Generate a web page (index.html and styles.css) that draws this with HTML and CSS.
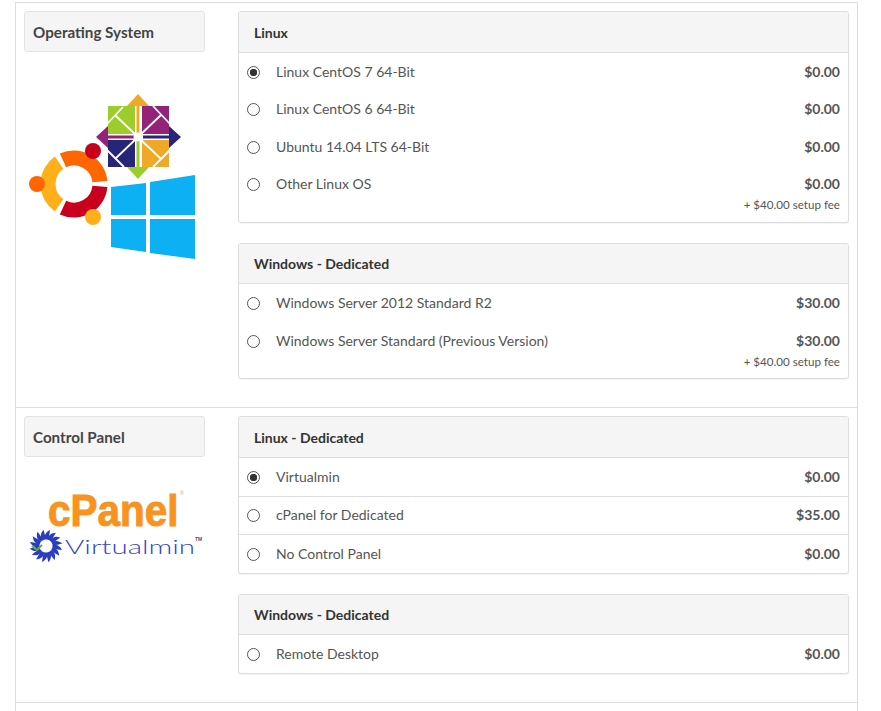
FILE: index.html
```html
<!DOCTYPE html>
<html lang="en">
<head>
<meta charset="utf-8">
<title>Configure Server</title>
<link rel="stylesheet" href="styles.css">
</head>
<body>
<main class="config">
  <section class="group">
    <div class="side">
      <h3 class="side-title">Operating System</h3>
      <svg class="logo logo-os" viewBox="29 94 167 166" width="167" height="166" aria-hidden="true">
        <polygon fill="#f0a926" points="138,94 149,106 139.5,106 139.5,134 136.5,134 136.5,106 127,106"/>
        <polygon fill="#9ccd2a" points="138,179 127,167 136.5,167 136.5,140 139.5,140 139.5,167 149,167"/>
        <polygon fill="#932279" points="96,137 108,126 108,135.5 134,135.5 134,138.5 108,138.5 108,148"/>
        <polygon fill="#262577" points="181,137 169,126 169,135.5 143,135.5 143,138.5 169,138.5 169,148"/>
        <rect x="108" y="106" width="27" height="28" fill="#9ccd2a"/>
        <rect x="142" y="106" width="27" height="28" fill="#932279"/>
        <rect x="108" y="140" width="27" height="27" fill="#262577"/>
        <rect x="142" y="140" width="27" height="27" fill="#f0a926"/>
        <g class="cent-lines">
          <path d="M138 137 L115 115 M107 124 L123 107"/>
          <path d="M138 137 L161 115 M153 106 L170 124"/>
          <path d="M138 137 L115 159 M107 150 L124 167"/>
          <path d="M138 137 L161 159 M170 150 L153 167"/>
        </g>
        <circle cx="138" cy="137" r="4.5" fill="#fff"/>
        <g fill="none" stroke-width="15">
          <path stroke="#f60" d="M63 160.4 A26 26 0 0 1 99.9 181.7"/>
          <path stroke="#c9001d" d="M99.9 186.3 A26 26 0 0 1 63 207.6"/>
          <path stroke="#fdb01a" d="M59.1 205.3 A26 26 0 0 1 59.1 162.7"/>
        </g>
        <circle cx="93" cy="151" r="8" fill="#c9001d"/>
        <circle cx="37" cy="184" r="8" fill="#f60"/>
        <circle cx="93" cy="217" r="8" fill="#fdb01a"/>
        <g fill="#0cb0f3">
          <polygon points="111,187 146,183 146,215 111,215"/>
          <polygon points="150,182 195,175 195,215 150,215"/>
          <polygon points="111,219 146,219 146,252 111,247"/>
          <polygon points="150,219 195,219 195,259 150,253"/>
        </g>
      </svg>
    </div>
    <div class="panels">
      <div class="panel">
        <h4 class="panel-head">Linux</h4>
        <label class="row"><input class="radio" type="radio" name="os" checked><span class="name">Linux CentOS 7 64-Bit</span><span class="price"><b>$0.00</b></span></label>
        <label class="row"><input class="radio" type="radio" name="os"><span class="name">Linux CentOS 6 64-Bit</span><span class="price"><b>$0.00</b></span></label>
        <label class="row"><input class="radio" type="radio" name="os"><span class="name">Ubuntu 14.04 LTS 64-Bit</span><span class="price"><b>$0.00</b></span></label>
        <label class="row"><input class="radio" type="radio" name="os"><span class="name">Other Linux OS</span><span class="price"><b>$0.00</b><small class="fee">+ $40.00 setup fee</small></span></label>
      </div>
      <div class="panel">
        <h4 class="panel-head">Windows - Dedicated</h4>
        <label class="row"><input class="radio" type="radio" name="os"><span class="name">Windows Server 2012 Standard R2</span><span class="price"><b>$30.00</b></span></label>
        <label class="row"><input class="radio" type="radio" name="os"><span class="name">Windows Server Standard (Previous Version)</span><span class="price"><b>$30.00</b><small class="fee">+ $40.00 setup fee</small></span></label>
      </div>
    </div>
  </section>
  <section class="group">
    <div class="side">
      <h3 class="side-title">Control Panel</h3>
      <svg class="logo logo-cp" viewBox="24 485 181 80" width="181" height="80" aria-hidden="true">
        <defs>
          <path id="blade" d="M45 539.5 C44 535 46 532 50 530 C49.5 533 49.5 536 48 539.5 Z"/>
        </defs>
        <text class="cp-word" transform="translate(48 526) scale(.92 1)">cPanel</text>
        <text class="cp-reg" x="180" y="495">®</text>
        <g fill="#2a3cc0">
          <use href="#blade"/>
          <use href="#blade" transform="rotate(22.5 46 546)"/>
          <use href="#blade" transform="rotate(45 46 546)"/>
          <use href="#blade" transform="rotate(67.5 46 546)"/>
          <use href="#blade" transform="rotate(90 46 546)"/>
          <use href="#blade" transform="rotate(112.5 46 546)"/>
          <use href="#blade" transform="rotate(135 46 546)"/>
          <use href="#blade" transform="rotate(157.5 46 546)"/>
          <use href="#blade" transform="rotate(180 46 546)"/>
          <use href="#blade" transform="rotate(202.5 46 546)"/>
          <use href="#blade" transform="rotate(225 46 546)"/>
          <use href="#blade" transform="rotate(247.5 46 546)"/>
          <use href="#blade" transform="rotate(270 46 546)"/>
          <use href="#blade" transform="rotate(292.5 46 546)"/>
          <use href="#blade" transform="rotate(315 46 546)"/>
          <use href="#blade" transform="rotate(337.5 46 546)"/>
        </g>
        <path d="M32 546 L37 550 L42 545" fill="none" stroke="#5cb531" stroke-width="2"/>
        <text class="vm-word" x="65" y="554" textLength="130" lengthAdjust="spacingAndGlyphs">Virtualmin</text>
        <text class="vm-tm" x="195" y="541">TM</text>
      </svg>
    </div>
    <div class="panels">
      <div class="panel">
        <h4 class="panel-head">Linux - Dedicated</h4>
        <label class="row row-line"><input class="radio" type="radio" name="cp" checked><span class="name">Virtualmin</span><span class="price"><b>$0.00</b></span></label>
        <label class="row row-line"><input class="radio" type="radio" name="cp"><span class="name">cPanel for Dedicated</span><span class="price"><b>$35.00</b></span></label>
        <label class="row row-line"><input class="radio" type="radio" name="cp"><span class="name">No Control Panel</span><span class="price"><b>$0.00</b></span></label>
      </div>
      <div class="panel">
        <h4 class="panel-head">Windows - Dedicated</h4>
        <label class="row row-line"><input class="radio" type="radio" name="cp"><span class="name">Remote Desktop</span><span class="price"><b>$0.00</b></span></label>
      </div>
    </div>
  </section>
  <div class="group group-end"></div>
</main>
</body>
</html>
```

FILE: styles.css
```css
* { box-sizing: border-box; }
html, body { margin: 0; height: 711px; overflow: hidden; background: #fff; }
body { padding-top: 2px; font-family: "Lato", sans-serif; font-size: 14px; color: #555; }
.config { width: 843px; margin-left: 15px; border-left: 1px solid #ddd; border-right: 1px solid #ddd; height: 709px; overflow: hidden; }
.group { display: flex; padding: 8px; border-top: 1px solid #ddd; }
.group-end { height: 10px; }
.side { width: 181px; flex: none; }
.side-title { margin: 0; height: 41px; padding: 0 8px; display: flex; align-items: center; background: #f5f5f5; border: 1px solid #e3e3e3; border-radius: 3px; font-size: 15.2px; font-weight: 700; color: #444; }
.logo { display: block; }
.logo-os { margin: 42px 0 0 5px; }
.logo-cp { margin: 28px 0 0 0; }
.cent-lines path { fill: none; stroke: #fff; stroke-width: 1.8; }
.cp-word { font-family: "Liberation Sans", sans-serif; font-size: 44px; font-weight: 700; fill: #f7931e; stroke: #f7931e; stroke-width: 1; }
.cp-reg { font-family: "Liberation Sans", sans-serif; font-size: 5px; fill: #f7931e; }
.vm-word { font-family: "Lato", sans-serif; font-size: 20px; font-weight: 300; fill: #3347c4; }
.vm-tm { font-family: "Liberation Sans", sans-serif; font-size: 5px; font-weight: 700; fill: #555; }
.panels { margin-left: 33px; width: 611px; flex: none; }
.panel { margin-bottom: 20px; background: #fff; border: 1px solid #ddd; border-radius: 3px; box-shadow: 0 1px 1px rgba(0,0,0,.05); }
.panel-head { margin: 0; height: 40.75px; padding: 0.5px 15px 0; display: flex; align-items: center; background: #f5f5f5; border-bottom: 1px solid #ddd; font-size: 14px; font-weight: 700; color: #333; border-radius: 3px 3px 0 0; }
.row { display: flex; align-items: flex-start; padding: 10px 8px 9.5px; line-height: 18px; min-height: 37.5px; }
.row-line { padding-top: 9.75px; min-height: 38.5px; border-bottom: 1px solid #ddd; }
.panel-head + .row-line { padding-top: 10px; min-height: 38.75px; }
.row-line:last-child { min-height: 37.5px; border-bottom: 0; }
.radio { appearance: none; flex: none; width: 13px; height: 13px; margin: 3px 16px 0 0; border: 1.2px solid #555; border-radius: 50%; background: #fff; }
.radio:checked { background: radial-gradient(circle, #333 0 3.4px, #fff 4px); }
.name { flex: 1; }
.price { text-align: right; }
.price b { display: block; font-weight: 700; color: #555; }
.fee { display: block; font-size: 11.6px; line-height: 16px; margin-top: 4px; margin-bottom: -1.25px; color: #555; }
```
